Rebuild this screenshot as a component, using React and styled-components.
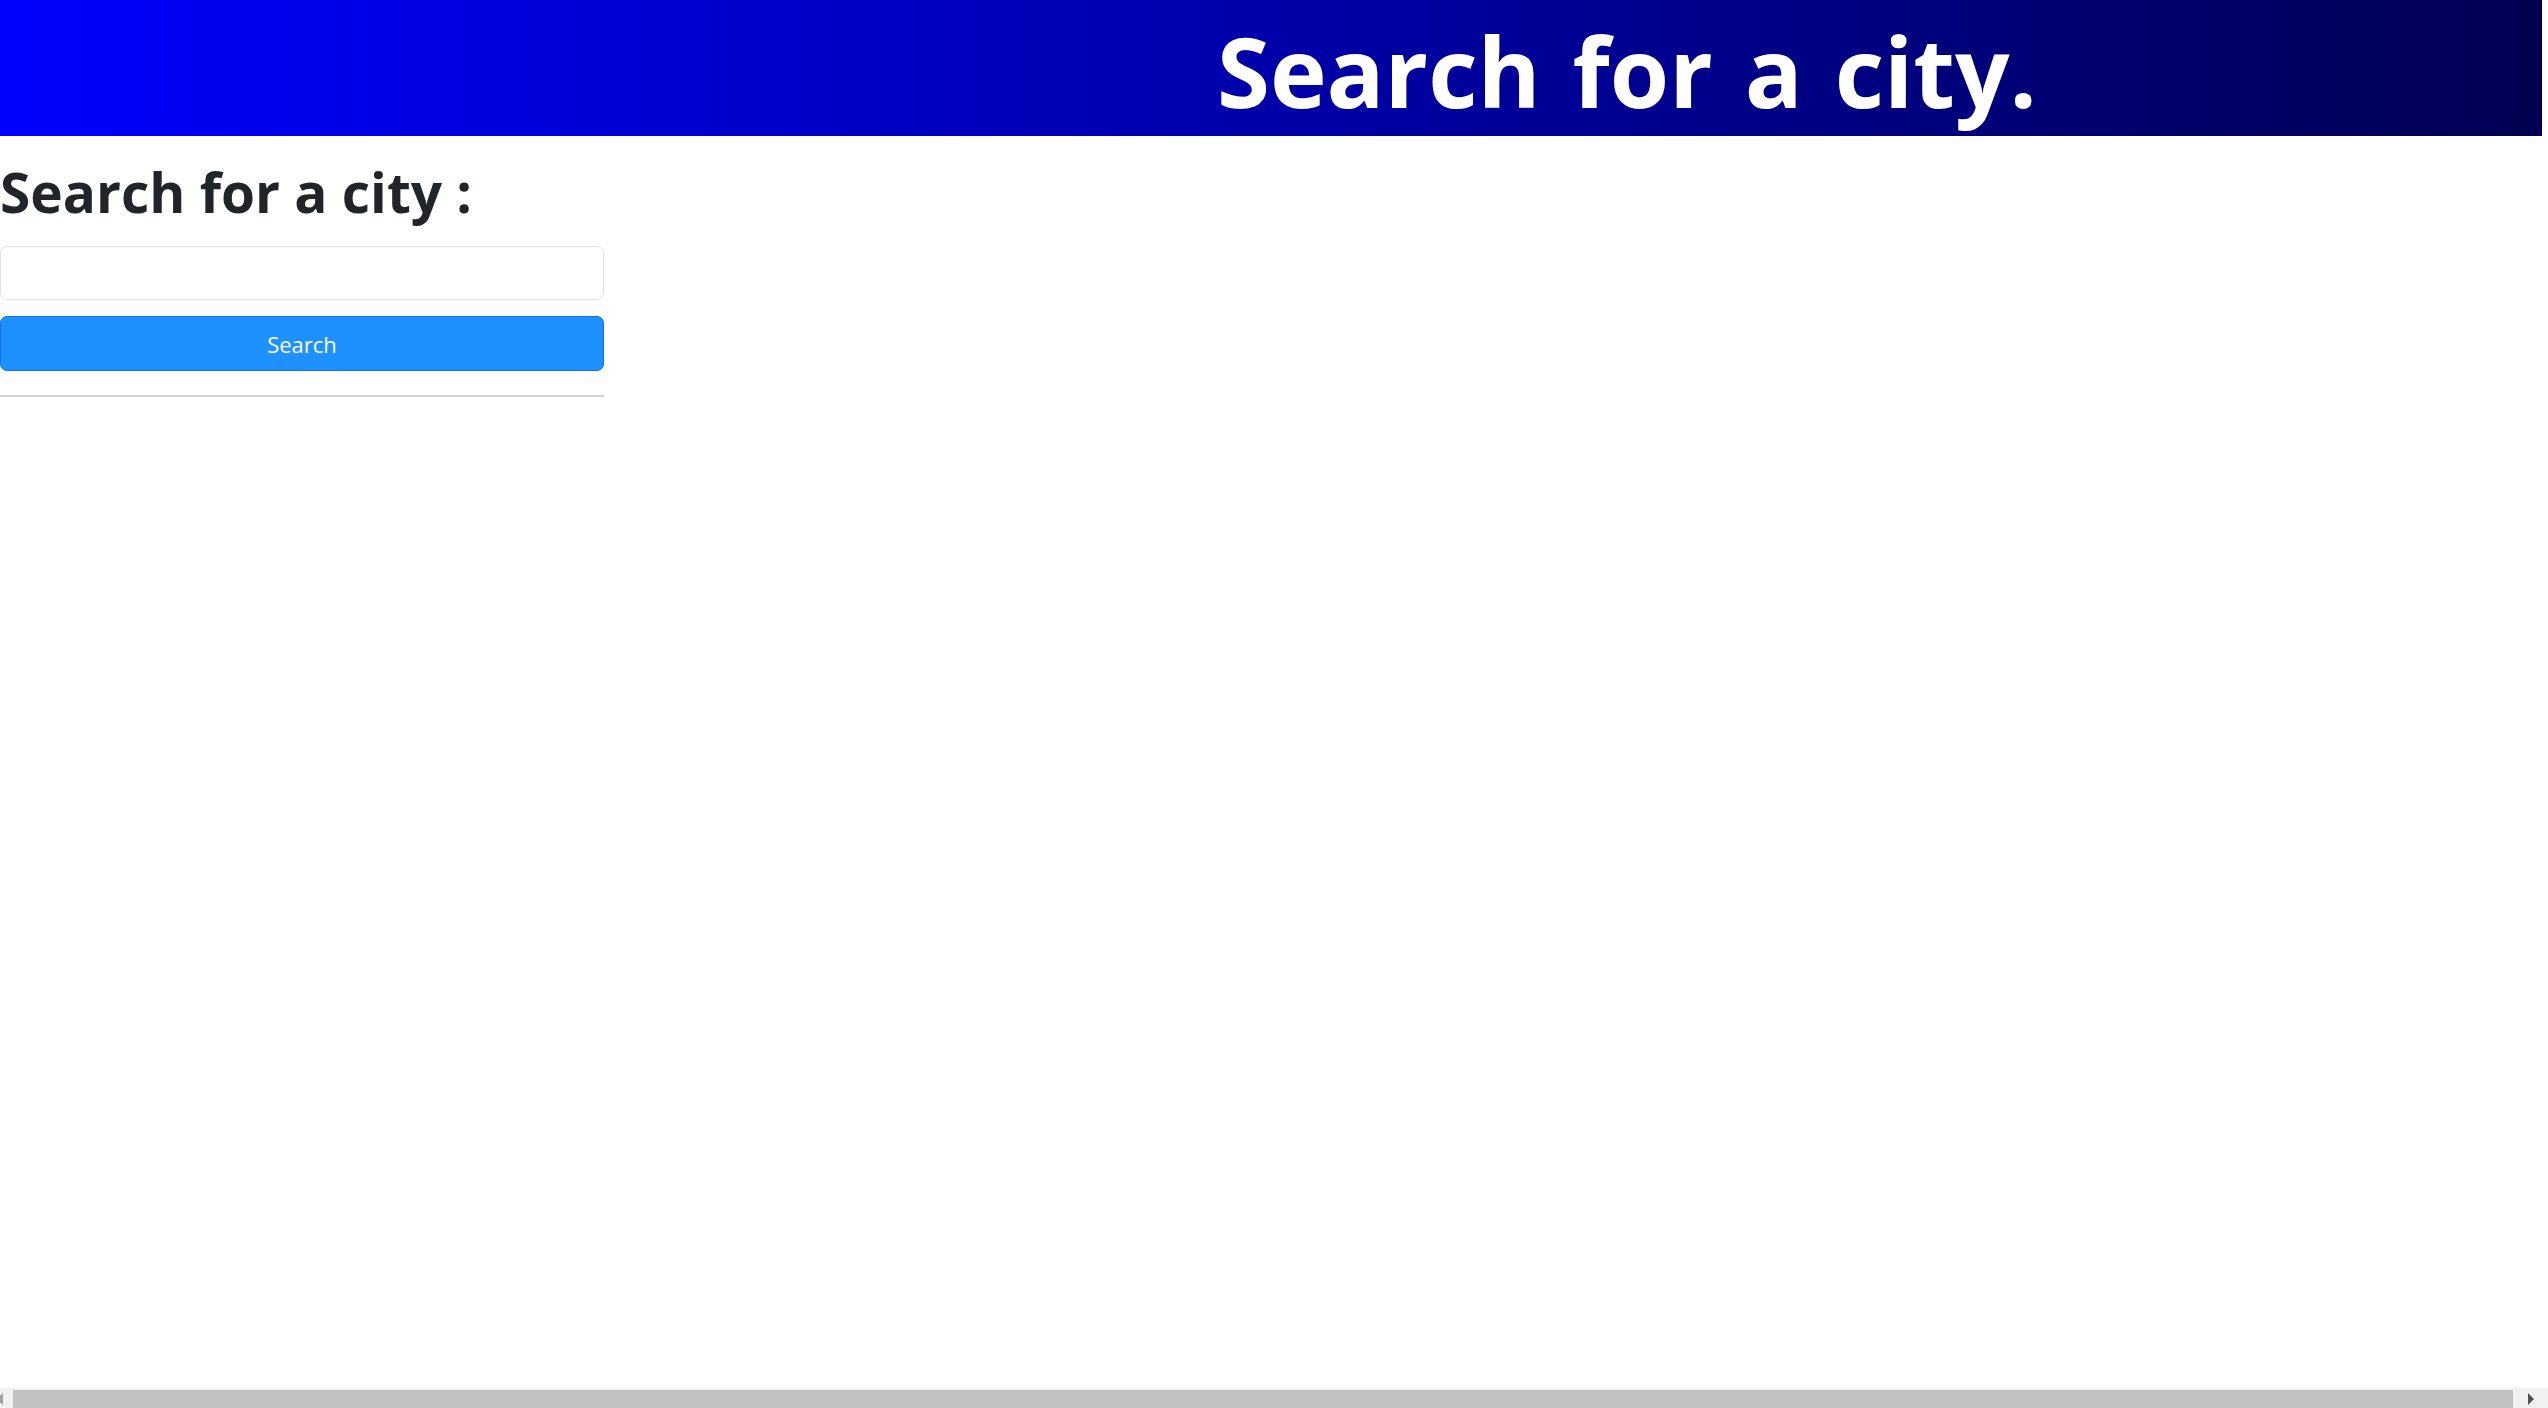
import React from "react";
import styled, { createGlobalStyle } from "styled-components";

const Global = createGlobalStyle`
  html, body { margin: 0; padding: 0; background: #ffffff; }
  body { font-family: "Open Sans", "Noto Sans", "Noto Sans CJK KR", sans-serif; overflow: hidden; }
  * { box-sizing: border-box; }
`;

const Page = styled.div`
  height: 100vh;
  display: flex;
  flex-direction: column;
  overflow: hidden;
`;

const Header = styled.header`
  width: 2542px;
  height: 136px;
  flex: none;
  background: linear-gradient(to right, #0000ff, #000052);
  display: flex;
  align-items: center;
  padding: 5px 0 0 1217px;
`;

const Title = styled.h1`
  margin: 0;
  font-size: 96px;
  line-height: 131px;
  font-weight: 700;
  color: #ffffff;
  word-spacing: 7px;
  white-space: nowrap;
`;

const Main = styled.main`
  flex: 1;
  display: flex;
  flex-direction: column;
  width: 604px;
  padding-top: 23px;
`;

const Heading = styled.h2`
  margin: 0 0 21px;
  font-size: 55px;
  line-height: 66px;
  font-weight: 700;
  color: #212529;
  white-space: nowrap;
`;

const Input = styled.input`
  height: 54px;
  width: 100%;
  border: 1px solid #dee2e6;
  border-radius: 7px;
  background: #fff;
  font: inherit;
  font-size: 22px;
  padding: 0 16px;
  outline: none;
`;

const Button = styled.button`
  margin-top: 16px;
  height: 55px;
  width: 100%;
  background: #1e90ff;
  border: 1px solid #0d6efd;
  border-radius: 7px;
  color: #ffffff;
  font-family: inherit;
  font-size: 22px;
  line-height: 1;
  cursor: pointer;
`;

const Rule = styled.hr`
  margin: 24px 0 0;
  border: 0;
  border-top: 2px solid #d4d4d4;
  width: 100%;
`;

const Spacer = styled.div`
  flex: 1;
`;

const Scrollbar = styled.div`
  flex: none;
  height: 20px;
  background: #f1f1f1;
  display: flex;
  align-items: flex-end;
  padding-top: 2px;
`;

const ArrowBox = styled.div`
  width: ${(p) => p.$w}px;
  height: 18px;
  flex: none;
  display: flex;
  align-items: center;
  justify-content: ${(p) => (p.$left ? "flex-start" : "center")};
`;

const Thumb = styled.div`
  flex: 1;
  height: 18px;
  background: #c1c1c1;
`;

const Tri = ({ dir }) => (
  <svg width="8" height="12" viewBox="0 0 8 12" style={dir === "left" ? { marginLeft: -5 } : undefined}>
    {dir === "left" ? (
      <polygon points="8,0 8,12 1,6" fill="#a3a3a3" />
    ) : (
      <polygon points="1,0 1,12 7,6" fill="#505050" />
    )}
  </svg>
);

export default function App() {
  return (
    <>
      <Global />
      <Page>
        <Header>
          <Title>Search for a city.</Title>
        </Header>
        <Main>
          <Heading>Search for a city :</Heading>
          <Input type="text" aria-label="city" />
          <Button type="button">Search</Button>
          <Rule />
        </Main>
        <Spacer />
        <Scrollbar>
          <ArrowBox $w={13} $left>
            <Tri dir="left" />
          </ArrowBox>
          <Thumb />
          <ArrowBox $w={35}>
            <Tri dir="right" />
          </ArrowBox>
        </Scrollbar>
      </Page>
    </>
  );
}
